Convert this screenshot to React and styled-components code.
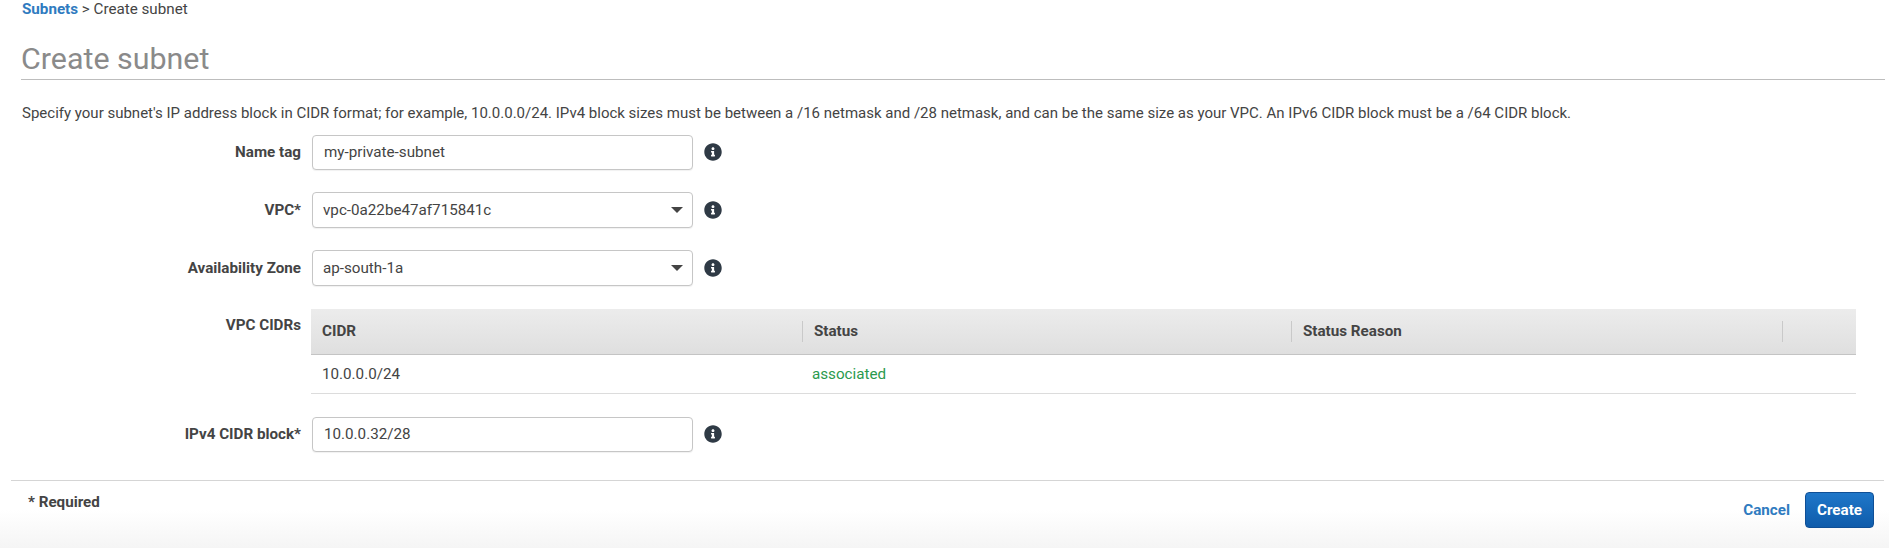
import React from 'react';
import styled, { createGlobalStyle } from 'styled-components';
import { FaInfoCircle } from 'react-icons/fa';

const GlobalStyle = createGlobalStyle`
  html, body {
    margin: 0;
    background: #fff;
    font-family: Roboto, "Liberation Sans", sans-serif;
    font-size: 15.2px;
    color: #444;
  }
`;

const Page = styled.div`
  width: 1889px;
  height: 548px;
  overflow: hidden;
  display: flex;
  flex-direction: column;
`;

const Breadcrumb = styled.div`
  height: 18px;
  line-height: 18px;
  padding-left: 22px;
  color: #444;
`;

const CrumbLink = styled.a`
  color: #2f7bc0;
  font-weight: 700;
`;

const Title = styled.h1`
  margin: 21px 4px 0 21px;
  height: 39.5px;
  line-height: 39px;
  font-size: 30.4px;
  font-weight: 400;
  color: #8a8a8a;
  border-bottom: 1px solid #bdbdbd;
`;

const Description = styled.p`
  margin: 23px 0 0 22px;
  line-height: 20px;
  font-size: 15px;
  color: #444;
`;

const Form = styled.div`
  margin-top: 12px;
  display: flex;
  flex-direction: column;
  flex: 1;
`;

const Row = styled.div`
  display: flex;
  align-items: ${(p) => (p.$top ? 'flex-start' : 'center')};
  margin-bottom: ${(p) => p.$gap}px;
`;

const Label = styled.label`
  width: 301px;
  flex: none;
  text-align: right;
  font-weight: 700;
  color: #444;
  line-height: 20px;
  padding-top: ${(p) => (p.$top ? '6px' : '0')};
`;

const Field = styled.div`
  margin-left: 11px;
  width: 381px;
  height: ${(p) => p.$height}px;
  box-sizing: border-box;
  border: 1px solid #c6c6c6;
  border-radius: 4px;
  background: #fff;
  display: flex;
  align-items: center;
  justify-content: space-between;
  padding: 0 9px 0 ${(p) => (p.$select ? '10px' : '11px')};
  color: #444;
  box-shadow: 0 1px 1px rgba(0, 0, 0, 0.06);
`;

const Caret = styled.span`
  width: 0;
  height: 0;
  border-left: 6.5px solid transparent;
  border-right: 6.5px solid transparent;
  border-top: 6px solid #444;
`;

const Info = styled(FaInfoCircle)`
  margin-left: 11px;
  width: 18px;
  height: 18px;
  color: #2f3a45;
`;

const Table = styled.div`
  margin-left: 10px;
  width: 1545px;
  margin-right: 33px;
`;

const HeaderRow = styled.div`
  height: 46px;
  box-sizing: border-box;
  display: grid;
  grid-template-columns: 491px 489px 491px 1fr;
  align-items: center;
  background: linear-gradient(#ececec, #dfdfdf);
  border-bottom: 1px solid #c4c4c4;
`;

const HeaderCell = styled.div`
  height: 21px;
  line-height: 21px;
  padding-left: 11px;
  font-weight: 700;
  color: #444;
  border-left: ${(p) => (p.$first ? 'none' : '1px solid #c9c9c9')};
`;

const BodyRow = styled.div`
  height: 39px;
  box-sizing: border-box;
  display: grid;
  grid-template-columns: 491px 489px 491px 1fr;
  align-items: center;
  border-bottom: 1px solid #dcdcdc;
`;

const BodyCell = styled.div`
  padding-left: ${(p) => (p.$first ? '11px' : '10px')};
  color: ${(p) => p.$color || '#444'};
`;

const Footer = styled.div`
  margin: 0 5px 0 11px;
  border-top: 1px solid #d5d5d5;
  display: flex;
  align-items: flex-start;
  justify-content: space-between;
  padding: 11px 10px 0 17px;
`;

const Required = styled.div`
  line-height: 20px;
  font-weight: 700;
  color: #444;
`;

const Actions = styled.div`
  display: flex;
  align-items: center;
  gap: 15px;
`;

const CancelLink = styled.a`
  color: #2f7bc0;
  font-weight: 700;
`;

const CreateButton = styled.button`
  width: 69px;
  height: 36px;
  border: 1px solid #0f4f96;
  border-radius: 4px;
  background: linear-gradient(#1f77c9, #0f5cab);
  color: #fff;
  font: 700 15.2px Roboto, "Liberation Sans", sans-serif;
`;

const BottomShade = styled.div`
  flex: 1;
  display: flex;
  flex-direction: column;
  background: linear-gradient(#fff 0, #fff 30px, #f5f5f5 100%);
`;

export default function App() {
  return (
    <Page>
      <GlobalStyle />
      <Breadcrumb>
        <CrumbLink>Subnets</CrumbLink> &gt; Create subnet
      </Breadcrumb>
      <Title>Create subnet</Title>
      <Description>
        Specify your subnet's IP address block in CIDR format; for example, 10.0.0.0/24. IPv4 block sizes must be between a /16 netmask and /28 netmask, and can be the same size as your VPC. An IPv6 CIDR block must be a /64 CIDR block.
      </Description>
      <Form>
        <Row $gap={22}>
          <Label>Name tag</Label>
          <Field $height={35}>
            my-private-subnet
          </Field>
          <Info />
        </Row>
        <Row $gap={22}>
          <Label>VPC*</Label>
          <Field $height={36} $select>
            vpc-0a22be47af715841c
            <Caret />
          </Field>
          <Info />
        </Row>
        <Row $gap={23}>
          <Label>Availability Zone</Label>
          <Field $height={36} $select>
            ap-south-1a
            <Caret />
          </Field>
          <Info />
        </Row>
        <Row $gap={23} $top>
          <Label $top>VPC CIDRs</Label>
          <Table>
            <HeaderRow>
              <HeaderCell $first>CIDR</HeaderCell>
              <HeaderCell>Status</HeaderCell>
              <HeaderCell>Status Reason</HeaderCell>
              <HeaderCell />
            </HeaderRow>
            <BodyRow>
              <BodyCell $first>10.0.0.0/24</BodyCell>
              <BodyCell $color="#2a9a4e">associated</BodyCell>
              <BodyCell />
              <BodyCell />
            </BodyRow>
          </Table>
        </Row>
        <Row $gap={28}>
          <Label>IPv4 CIDR block*</Label>
          <Field $height={35}>
            10.0.0.32/28
          </Field>
          <Info />
        </Row>
        <BottomShade>
          <Footer>
            <Required>* Required</Required>
            <Actions>
              <CancelLink>Cancel</CancelLink>
              <CreateButton>Create</CreateButton>
            </Actions>
          </Footer>
        </BottomShade>
      </Form>
    </Page>
  );
}
